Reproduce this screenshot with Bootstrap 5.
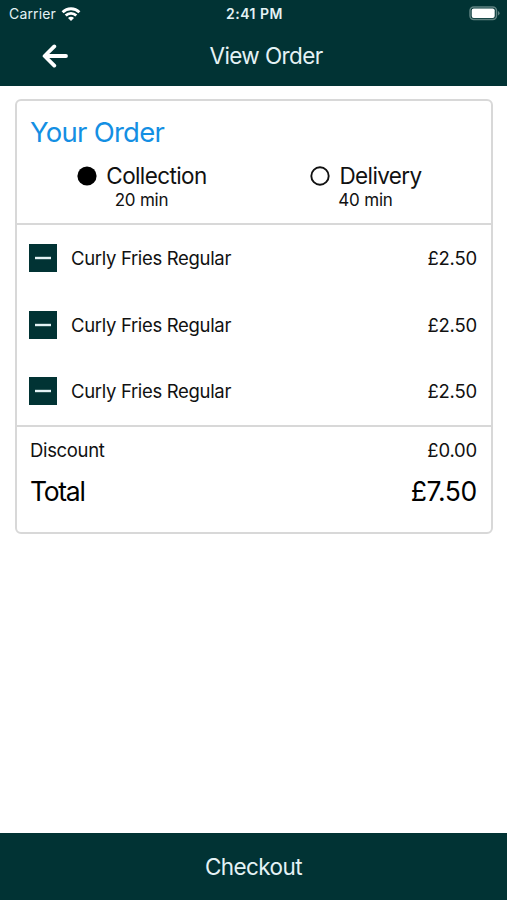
<!DOCTYPE html>
<html lang="en">
<head>
<meta charset="utf-8">
<meta name="viewport" content="width=device-width, initial-scale=1">
<title>View Order</title>
<link href="https://cdn.jsdelivr.net/npm/bootstrap@5.3.0/dist/css/bootstrap.min.css" rel="stylesheet">
<style>
  body { font-family: Inter, "Liberation Sans", sans-serif; color: #111; line-height: 1; background: #fff; }
  .brand-bg { background: #013334; color: #e4f2f5; }
  .app-header { height: 86px; }
  .status-bar { height: 27px; font-size: 14px; padding: 0 7px 0 9px; }
  .status-side { flex: 1 1 0; }
  .carrier { letter-spacing: .15px; }
  .status-time { font-weight: 600; font-size: 14px; letter-spacing: .5px; padding-top: 1px; }
  .title-bar { height: 58px; font-size: 22.5px; letter-spacing: -.6px; }
  .title-side { width: 100px; padding-left: 42px; }
  .title-text { padding-left: 25px; }
  .order-card { margin: 13px 14px 0 15px; border: 2px solid #d8d8d8; border-radius: 6px; height: 435px; }
  .order-top { height: 124px; padding: 17px 13px 0; border-bottom: 2px solid #d8d8d8; }
  .order-heading { font-size: 27.5px; letter-spacing: -.75px; color: #148fe3; line-height: 28px; font-weight: 400; }
  .methods { margin-top: 17px; }
  .method { font-size: 22.5px; letter-spacing: -.6px; line-height: 26px; gap: 9px; }
  .eta { font-size: 17px; letter-spacing: -.2px; line-height: 22px; padding-right: 1px; }
  .order-item { height: 66.5px; padding: 0 14px 0 12px; font-size: 18.5px; letter-spacing: -.33px; }
  .remove-btn { width: 28px; height: 28px; margin-right: 14px; }
  .price { letter-spacing: -.2px; }
  .totals { border-top: 2px solid #d8d8d8; padding: 13px 14px 0 13px; font-size: 18.5px; letter-spacing: -.33px; }
  .totals-row { height: 22px; }
  .grand { height: 32px; margin-top: 14px; font-size: 26.5px; color: #000; letter-spacing: -.35px; }
  .grand-label { letter-spacing: -1.3px; }
  .checkout { height: 67px; font-size: 22.5px; letter-spacing: -.6px; padding-top: 2px; }
</style>
</head>
<body>
<div class="d-flex flex-column vh-100 overflow-hidden">
  <header class="app-header brand-bg flex-shrink-0">
    <div class="status-bar d-flex align-items-center">
      <div class="status-side d-flex align-items-center">
        <span class="carrier">Carrier</span>
        <svg class="ms-1" width="21" height="14" viewBox="-2 0 21 14" fill="none" stroke="#fff" stroke-width="2.8">
          <path d="M.6 5.2a11.9 11.9 0 0 1 16.8 0M3.7 8.6a7.5 7.5 0 0 1 10.6 0"/>
          <path d="M9 14 6 11a4.2 4.2 0 0 1 6 0z" fill="#fff" stroke="none"/>
        </svg>
      </div>
      <span class="status-time">2:41 PM</span>
      <div class="status-side d-flex justify-content-end">
        <svg width="31" height="15" viewBox="0 0 31 15">
          <rect x="1" y="1" width="26.5" height="12.5" rx="3.8" fill="none" stroke="#5f8281" stroke-width="1.5"/>
          <rect x="2.7" y="2.6" width="23" height="9.3" rx="2" fill="#fff"/>
          <path d="M29 5v4.6q1.6-.8 1.6-2.3T29 5z" fill="#5f8281"/>
        </svg>
      </div>
    </div>
    <div class="title-bar d-flex align-items-center">
      <div class="title-side">
        <svg class="d-block" width="26" height="24" viewBox="0 0 26 24" fill="none" stroke="#fff" stroke-width="3.8" stroke-linecap="round" stroke-linejoin="round">
          <path d="M24 12H3M12.3 2.4 2.6 12l9.7 9.6"/>
        </svg>
      </div>
      <div class="title-text flex-grow-1 text-center">View Order</div>
      <div class="title-side"></div>
    </div>
  </header>

  <main class="flex-grow-1">
    <section class="order-card">
      <div class="order-top">
        <h1 class="order-heading mb-0">Your Order</h1>
        <div class="row g-0 methods">
          <div class="col-6 d-flex flex-column align-items-center">
            <div class="method d-flex align-items-center">
              <svg width="20" height="20" viewBox="0 0 20 20"><circle cx="10" cy="10" r="9.6"/></svg>
              <span>Collection</span>
            </div>
            <div class="eta">20 min</div>
          </div>
          <div class="col-6 d-flex flex-column align-items-center">
            <div class="method d-flex align-items-center">
              <svg width="20" height="20" viewBox="0 0 20 20"><circle cx="10" cy="10" r="8.7" fill="none" stroke="#111" stroke-width="1.9"/></svg>
              <span>Delivery</span>
            </div>
            <div class="eta">40 min</div>
          </div>
        </div>
      </div>
      <div class="order-item d-flex align-items-center">
        <svg class="remove-btn" viewBox="0 0 28 28"><path fill="#013334" d="M0 0h28v28H0z"/><path fill="#e4f2f5" d="M6 12.8h16v2.4H6z"/></svg>
        <span>Curly Fries Regular</span><span class="price ms-auto">£2.50</span>
      </div>
      <div class="order-item d-flex align-items-center">
        <svg class="remove-btn" viewBox="0 0 28 28"><path fill="#013334" d="M0 0h28v28H0z"/><path fill="#e4f2f5" d="M6 12.8h16v2.4H6z"/></svg>
        <span>Curly Fries Regular</span><span class="price ms-auto">£2.50</span>
      </div>
      <div class="order-item d-flex align-items-center">
        <svg class="remove-btn" viewBox="0 0 28 28"><path fill="#013334" d="M0 0h28v28H0z"/><path fill="#e4f2f5" d="M6 12.8h16v2.4H6z"/></svg>
        <span>Curly Fries Regular</span><span class="price ms-auto">£2.50</span>
      </div>
      <div class="totals">
        <div class="totals-row d-flex align-items-center justify-content-between"><span>Discount</span><span class="price">£0.00</span></div>
        <div class="grand d-flex align-items-center justify-content-between"><span class="grand-label">Total</span><span>£7.50</span></div>
      </div>
    </section>
  </main>

  <footer class="checkout brand-bg flex-shrink-0 d-flex align-items-center justify-content-center">Checkout</footer>
</div>
<script src="https://cdn.jsdelivr.net/npm/bootstrap@5.3.0/dist/js/bootstrap.bundle.min.js"></script>
</body>
</html>
